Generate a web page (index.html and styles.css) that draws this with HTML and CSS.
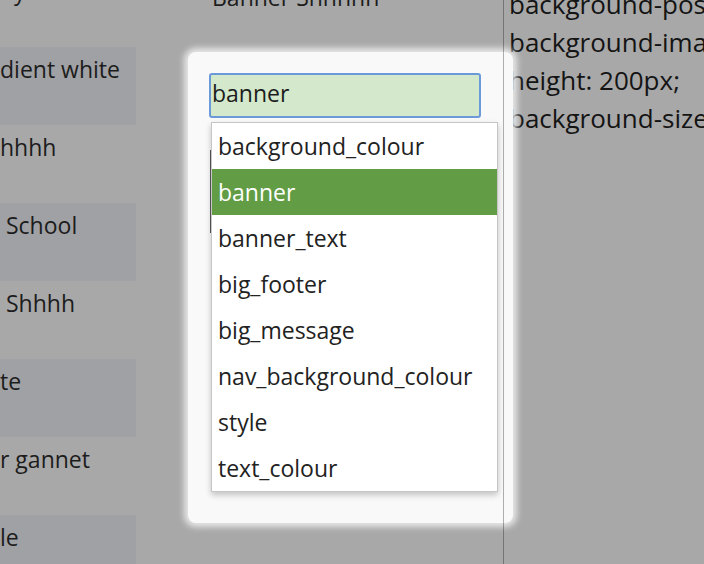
FILE: index.html
```html
<!DOCTYPE html>
<html>
<head>
<meta charset="utf-8">
<link rel="stylesheet" href="styles.css">
</head>
<body>
<div class="page">
  <div class="col-left">
    <div class="row">ny</div>
    <div class="row alt">dient white</div>
    <div class="row">hhhh</div>
    <div class="row alt"> School</div>
    <div class="row"> Shhhh</div>
    <div class="row alt">te</div>
    <div class="row">r gannet</div>
    <div class="row alt">le</div>
  </div>
  <div class="col-mid">
    <p class="title">Banner Shhhhh</p>
  </div>
  <div class="divider"></div>
  <div class="col-right">
    <div class="code-line">background-position: center;</div>
    <div class="code-line">background-image: url(banner.jpg);</div>
    <div class="code-line">height: 200px;</div>
    <div class="code-line">background-size: cover;</div>
  </div>
</div>

<div class="modal">
  <div class="field">
    <input class="search" type="text" value="banner">
  </div>
  <div class="under-edge"></div>
  <ul class="dropdown">
    <li class="option">background_colour</li>
    <li class="option selected">banner</li>
    <li class="option">banner_text</li>
    <li class="option">big_footer</li>
    <li class="option">big_message</li>
    <li class="option">nav_background_colour</li>
    <li class="option">style</li>
    <li class="option">text_colour</li>
  </ul>
</div>
</body>
</html>
```
FILE: styles.css
```css
html, body {
  margin: 0;
  padding: 0;
}
body {
  width: 704px;
  height: 564px;
  overflow: hidden;
  position: relative;
  background: #a8a8a8;
  font-family: "Open Sans", "Noto Sans", sans-serif;
  font-size: 23px;
  color: #1c1c1c;
}
.page {
  display: grid;
  grid-template-columns: 136px 367px 1px 1fr;
  height: 564px;
  align-items: start;
}
.col-left {
  margin-top: -31px;
  display: flex;
  flex-direction: column;
}
.row {
  height: 78px;
  box-sizing: border-box;
  padding-top: 6px;
  white-space: pre;
  overflow: hidden;
}
.row.alt {
  background: #a0a1a4;
}
.col-mid {
  padding-left: 76px;
}
.title {
  margin: -19px 0 0 0;
  white-space: nowrap;
}
.divider {
  height: 564px;
  background: rgba(0, 0, 0, 0.3);
  position: relative;
  z-index: 5;
}
.col-right {
  padding-left: 5px;
  margin-top: -15px;
  font-size: 26px;
  line-height: 38px;
  color: #141414;
  white-space: nowrap;
  overflow: hidden;
}
.modal {
  position: absolute;
  left: 188px;
  top: 52px;
  width: 325px;
  height: 471px;
  box-sizing: border-box;
  padding: 21px;
  background: #f9f9f9;
  border-radius: 8px;
  box-shadow: 0 0 6px 4px rgba(248, 248, 248, 0.8);
}
.search {
  display: block;
  box-sizing: border-box;
  width: 272px;
  height: 45px;
  margin: 0;
  padding: 0 0 5px 1px;
  border: 2px solid #6c99d8;
  border-radius: 3px;
  background: #d4e8cb;
  font-family: inherit;
  font-size: 23px;
  color: #1c1c1c;
  outline: none;
}
.under-edge {
  position: absolute;
  left: 22px;
  top: 98px;
  width: 2px;
  height: 83px;
  background: #5a5a5a;
}
.dropdown {
  position: absolute;
  left: 23px;
  top: 70px;
  width: 287px;
  margin: 0;
  padding: 0;
  list-style: none;
  box-sizing: border-box;
  background: #ffffff;
  border: 1px solid #c6c6c6;
  box-shadow: 0 3px 6px rgba(0, 0, 0, 0.22);
}
.option {
  height: 46px;
  line-height: 46px;
  padding-left: 6px;
  color: #222;
  white-space: nowrap;
}
.option.selected {
  background: #629c44;
  color: #ffffff;
}
```
